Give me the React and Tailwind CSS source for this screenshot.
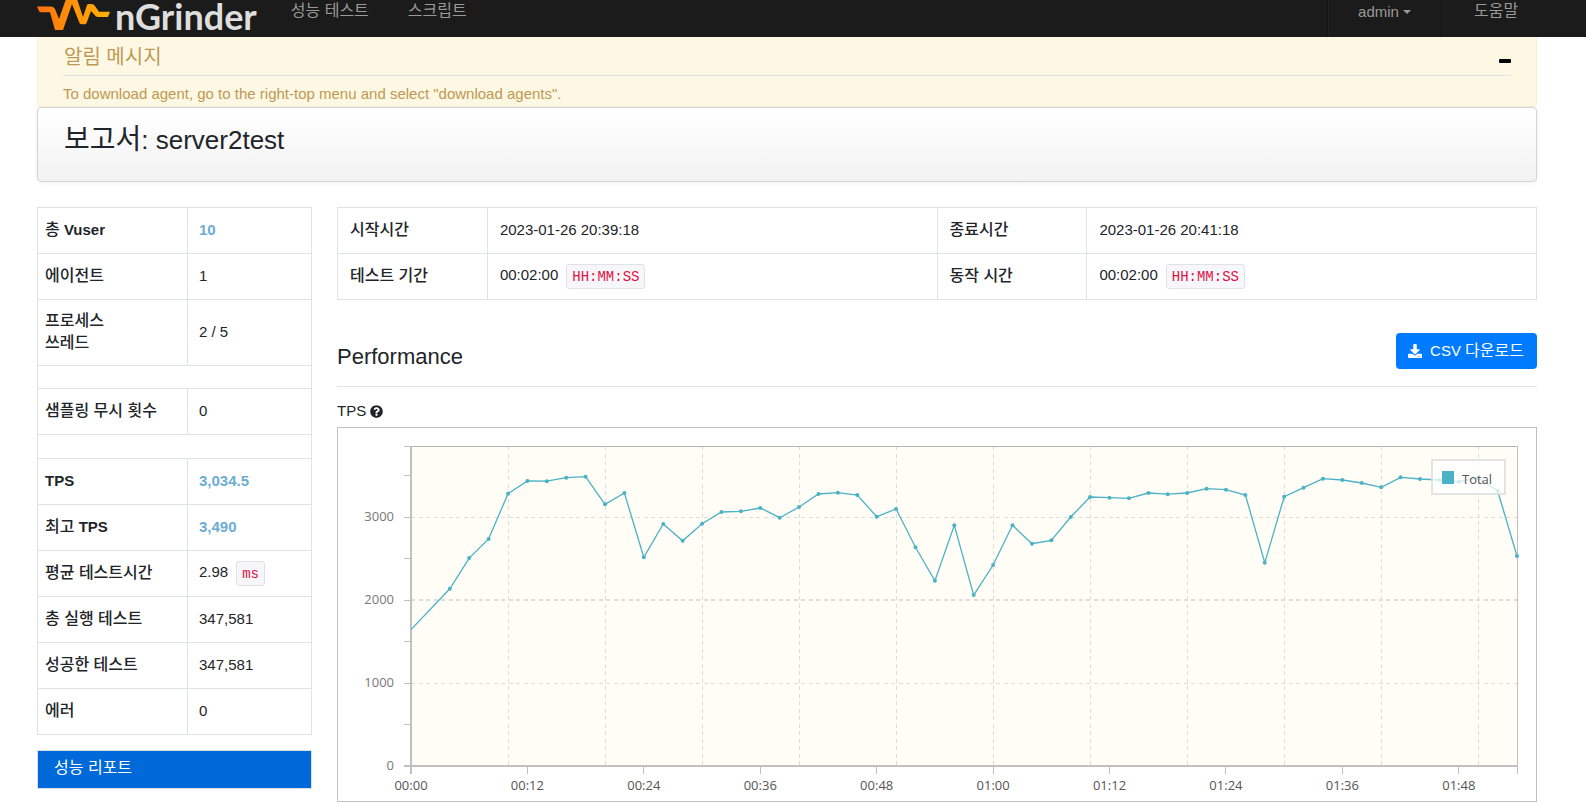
import React from 'react';
import { FaDownload, FaQuestionCircle } from 'react-icons/fa';

// [seconds since start, transactions per second]
const TPS = [
    [0, 1645], [4, 2138], [6, 2508], [8, 2738], [10, 3285], [12, 3438], [14, 3435], [16, 3478],
    [18, 3490], [20, 3157], [22, 3293], [24, 2517], [26, 2919], [28, 2717], [30, 2923], [32, 3064],
    [34, 3072], [36, 3112], [38, 2995], [40, 3124], [42, 3281], [44, 3297], [46, 3269], [48, 3007],
    [50, 3100], [52, 2638], [54, 2234], [56, 2903], [58, 2062], [60, 2424], [62, 2903], [64, 2681],
    [66, 2722], [68, 3004], [70, 3245], [72, 3237], [74, 3229], [76, 3293], [78, 3278], [80, 3293],
    [82, 3345], [84, 3333], [86, 3269], [88, 2452], [90, 3249], [92, 3357], [94, 3466], [96, 3450],
    [98, 3414], [100, 3362], [102, 3483], [104, 3462], [106, 3450], [108, 3430], [110, 3475],
    [112, 3321], [114, 2533],
];

const PLOT = { left: 73, right: 1179, top: 18, bottom: 338 };
const MAX_SECONDS = 114;
const MAX_TPS = 3860;

const xOf = (s) => PLOT.left + (s / MAX_SECONDS) * (PLOT.right - PLOT.left);
const yOf = (v) => PLOT.bottom - (v / MAX_TPS) * (PLOT.bottom - PLOT.top);

const timeLabel = (s) =>
    `${String(Math.floor(s / 60)).padStart(2, '0')}:${String(s % 60).padStart(2, '0')}`;

function Logo() {
    return (
        <a href="#home" aria-label="nGrinder" className="flex h-[37px] items-start">
            <svg width="76" height="37" viewBox="0 0 76 37" fill="none" aria-hidden="true">
                <defs>
                    <linearGradient id="wave" x1="0" y1="0" x2="76" y2="0" gradientUnits="userSpaceOnUse">
                        <stop offset="0" stopColor="#ff7010" />
                        <stop offset="0.5" stopColor="#ff9408" />
                        <stop offset="1" stopColor="#ffb400" />
                    </linearGradient>
                </defs>
                <path
                    d="M0 6.5 L14 6.5 Q17 6.5 18 9 L22 19 L29 -1 L40 -1 L46 17 L50 5 Q50.5 4 52 4 L55 4 Q56.5 4 57.5 5.5 L62 11.7 L73 11.7 L71 17 L61 17 Q59.5 17 58.5 16 L54 11 L49.5 23 Q49 24.3 47.5 24.3 L44.5 24.3 Q43 24.3 42.5 23 L35 4 L26 30 L18 30 L13 12.3 L4 12.3 Q2.5 12.3 2 11 Z"
                    fill="url(#wave)"
                />
            </svg>
            <span className="ml-[2px] font-['Lato',sans-serif] text-[36px] leading-8 font-bold text-[#dedede]">
                nGrinder
            </span>
        </a>
    );
}

function NavBar() {
    return (
        <header className="flex h-[37px] bg-[#1b1b1b] pl-[37px] text-[#999]">
            <Logo />
            <nav className="flex flex-1 pt-px text-base leading-5">
                <a href="#test" className="ml-[34px]">성능 테스트</a>
                <a href="#script" className="ml-[39px]">스크립트</a>
            </nav>
            <div className="flex">
                <button type="button" className="flex w-[114px] justify-center gap-1 border-l border-[#111] pt-[2px] leading-5 shadow-[inset_1px_0_0_#222]">
                    admin
                    <span className="mt-2 h-0 border-x-4 border-t-4 border-x-transparent border-t-[#999]" />
                </button>
                <a href="#help" className="w-[145px] border-l border-[#111] pt-px pl-8 text-base leading-5 shadow-[inset_1px_0_0_#222]">
                    도움말
                </a>
            </div>
        </header>
    );
}

function Announcement() {
    return (
        <section className="rounded-b border border-t-0 border-[#fbeed5] bg-[#fcf8e3] px-[25px] text-[#c09853]">
            <div className="flex h-[39px] items-center justify-between border-b border-[#dee2e6]">
                <h2 className="pt-px pl-px text-[20px] leading-6">알림 메시지</h2>
                <button type="button" aria-label="접기" className="pt-[10px]">
                    <span className="block h-1 w-3 rounded-[1px] bg-black" />
                </button>
            </div>
            <p className="h-[30px] pt-[7px] leading-[22px]">
                To download agent, go to the right-top menu and select "download agents".
            </p>
        </section>
    );
}

function Unit({ children }) {
    return (
        <code className="ml-2 inline-block rounded-[3px] border border-[#e1e1e8] bg-[#f7f7f9] px-[5px] pt-[2px] align-middle font-['Liberation_Mono',monospace] text-sm leading-[21px] text-[#dd1144]">
            {children}
        </code>
    );
}

function SummaryRow({ label, children, tall, strong }) {
    return (
        <tr className={tall ? 'h-[66px]' : 'h-[46px]'}>
            <th scope="row" className="border border-[#dee2e6] pb-[2px] pl-[7px] text-left leading-[22px] font-medium">
                {label}
            </th>
            <td className={strong ? 'border border-[#dee2e6] pl-[11px] font-bold text-[#6dadd1]' : 'border border-[#dee2e6] pl-[11px]'}>
                {children}
            </td>
        </tr>
    );
}

function Summary() {
    return (
        <aside className="w-[275px] shrink-0">
            <table className="w-full table-fixed border-collapse">
                <colgroup>
                    <col className="w-[150px]" />
                    <col />
                </colgroup>
                <tbody>
                    <SummaryRow label={<><span className="text-base">총</span> <b>Vuser</b></>} strong>10</SummaryRow>
                    <SummaryRow label={<span className="text-base">에이전트</span>}>1</SummaryRow>
                    <SummaryRow label={<span className="text-base leading-[22px]">프로세스<br />쓰레드</span>} tall>2 / 5</SummaryRow>
                    <tr className="h-[23px]">
                        <td colSpan={2} className="border border-[#dee2e6]" />
                    </tr>
                    <SummaryRow label={<span className="text-base">샘플링 무시 횟수</span>}>0</SummaryRow>
                    <tr className="h-6">
                        <td colSpan={2} className="border border-[#dee2e6]" />
                    </tr>
                    <SummaryRow label={<b>TPS</b>} strong>3,034.5</SummaryRow>
                    <SummaryRow label={<><span className="text-base">최고</span> <b>TPS</b></>} strong>3,490</SummaryRow>
                    <SummaryRow label={<span className="text-base">평균 테스트시간</span>}>2.98<Unit>ms</Unit></SummaryRow>
                    <SummaryRow label={<span className="text-base">총 실행 테스트</span>}>347,581</SummaryRow>
                    <SummaryRow label={<span className="text-base">성공한 테스트</span>}>347,581</SummaryRow>
                    <SummaryRow label={<span className="text-base">에러</span>}>0</SummaryRow>
                </tbody>
            </table>
            <a href="#report" className="mt-[15px] block border border-[#dcdfe3] bg-[#0069d9] px-4 pt-[6px] pb-[9px] text-base leading-[22px] text-white">
                성능 리포트
            </a>
        </aside>
    );
}

function TimeHead({ children }) {
    return (
        <th scope="row" className="w-1/8 border border-[#dee2e6] pb-[2px] pl-3 text-left text-base font-medium">
            {children}
        </th>
    );
}

function TimeCell({ children }) {
    return <td className="w-3/8 border border-[#dee2e6] pl-3">{children}</td>;
}

function TimeTable() {
    return (
        <table className="w-full table-fixed border-collapse">
            <tbody>
                <tr className="h-[46px]">
                    <TimeHead>시작시간</TimeHead>
                    <TimeCell>2023-01-26 20:39:18</TimeCell>
                    <TimeHead>종료시간</TimeHead>
                    <TimeCell>2023-01-26 20:41:18</TimeCell>
                </tr>
                <tr className="h-[46px]">
                    <TimeHead>테스트 기간</TimeHead>
                    <TimeCell>00:02:00<Unit>HH:MM:SS</Unit></TimeCell>
                    <TimeHead>동작 시간</TimeHead>
                    <TimeCell>00:02:00<Unit>HH:MM:SS</Unit></TimeCell>
                </tr>
            </tbody>
        </table>
    );
}

function TpsChart() {
    const gridSeconds = [10, 20, 30, 40, 50, 60, 70, 80, 90, 100, 110];
    const labelSeconds = [0, 12, 24, 36, 48, 60, 72, 84, 96, 108];
    const line = TPS.map(([s, v]) => `${xOf(s).toFixed(1)},${yOf(v).toFixed(1)}`).join(' ');

    return (
        <div className="border border-[#c0c0c0]">
            <svg viewBox="0 0 1198 373" className="block w-full font-['Open_Sans',sans-serif] text-[13px]" role="img" aria-label="TPS">
                <rect x={PLOT.left} y={PLOT.top} width={PLOT.right - PLOT.left} height={PLOT.bottom - PLOT.top} fill="#fffdf6" />

                <g stroke="#dddddd" strokeDasharray="4 3.5" shapeRendering="crispEdges">
                    {gridSeconds.map((s) => (
                        <line key={s} x1={xOf(s)} x2={xOf(s)} y1={PLOT.top} y2={PLOT.bottom} />
                    ))}
                    {[1000, 2000, 3000].map((v) => (
                        <line key={v} x1={PLOT.left} x2={PLOT.right} y1={yOf(v)} y2={yOf(v)} strokeWidth={v === 2000 ? 2 : 1} />
                    ))}
                </g>

                <g stroke="#c0c0c0" shapeRendering="crispEdges">
                    <line x1={PLOT.left} x2={PLOT.right} y1={PLOT.top} y2={PLOT.top} stroke="#b8b4b0" />
                    <line x1={PLOT.right} x2={PLOT.right} y1={PLOT.top} y2={PLOT.bottom + 8} />
                    <line x1={PLOT.left} x2={PLOT.left} y1={PLOT.top} y2={PLOT.bottom + 8} strokeWidth="2" />
                    <line x1={PLOT.left - 7} x2={PLOT.right} y1={PLOT.bottom} y2={PLOT.bottom} strokeWidth="2" />
                    {[500, 1000, 1500, 2000, 2500, 3000, 3500, MAX_TPS].map((v) => (
                        <line key={v} x1={PLOT.left - 7} x2={PLOT.left} y1={yOf(v)} y2={yOf(v)} />
                    ))}
                    {labelSeconds.map((s) => (
                        <line key={s} x1={xOf(s)} x2={xOf(s)} y1={PLOT.bottom} y2={PLOT.bottom + 8} />
                    ))}
                </g>

                <g fill="#777777" textAnchor="end">
                    {[0, 1000, 2000, 3000].map((v) => (
                        <text key={v} x="56" y={yOf(v) + 4}>{v}</text>
                    ))}
                </g>
                <g fill="#555555" textAnchor="middle">
                    {labelSeconds.map((s) => (
                        <text key={s} x={xOf(s)} y="362">{timeLabel(s)}</text>
                    ))}
                </g>

                <polyline points={line} fill="none" stroke="#4bb2c5" strokeWidth="1.3" />
                {TPS.slice(1).map(([s, v]) => (
                    <circle key={s} cx={xOf(s)} cy={yOf(v)} r="2" fill="#4bb2c5" />
                ))}

                <rect x="1094" y="32" width="73" height="34" fill="#ffffff" fillOpacity="0.75" stroke="#dddddd" strokeOpacity="0.8" strokeWidth="2" />
                <rect x="1104" y="43" width="12" height="13" fill="#4bb2c5" />
                <text x="1124" y="56" fill="#555555" className="text-[13px]">Total</text>
            </svg>
        </div>
    );
}

function Performance() {
    return (
        <section>
            <div className="mt-[33px] mb-[13px] flex justify-between border-b border-[#dee2e6] pb-[13px]">
                <h2 className="mt-2 text-[22px] leading-8">Performance</h2>
                <button type="button" className="flex h-9 items-center gap-2 rounded bg-[#007bff] pr-[13px] pb-px pl-3 text-white">
                    <FaDownload className="size-[14px]" />
                    <span>CSV <span className="text-base">다운로드</span></span>
                </button>
            </div>
            <h3 className="mb-[5px] flex items-center gap-1 leading-[22px]">
                TPS
                <FaQuestionCircle className="size-[13px]" />
            </h3>
            <TpsChart />
        </section>
    );
}

export default function App() {
    return (
        <div className="bg-white font-['Liberation_Sans','Noto_Sans_CJK_KR',sans-serif] text-[15px] text-[#212529]">
            <NavBar />
            <main className="pr-[49px] pl-[37px]">
                <Announcement />
                <div className="h-[75px] rounded border border-[#d4d4d4] bg-linear-to-b from-white to-[#f2f2f2] px-[26px] pt-[14px] shadow-[0_1px_4px_rgba(0,0,0,0.065)]">
                    <h1 className="text-[26px] leading-9"><span className="text-[28px]">보고서</span>: server2test</h1>
                </div>
                <div className="mt-[25px] flex gap-[25px]">
                    <Summary />
                    <div className="min-w-0 flex-1">
                        <TimeTable />
                        <Performance />
                    </div>
                </div>
            </main>
        </div>
    );
}
